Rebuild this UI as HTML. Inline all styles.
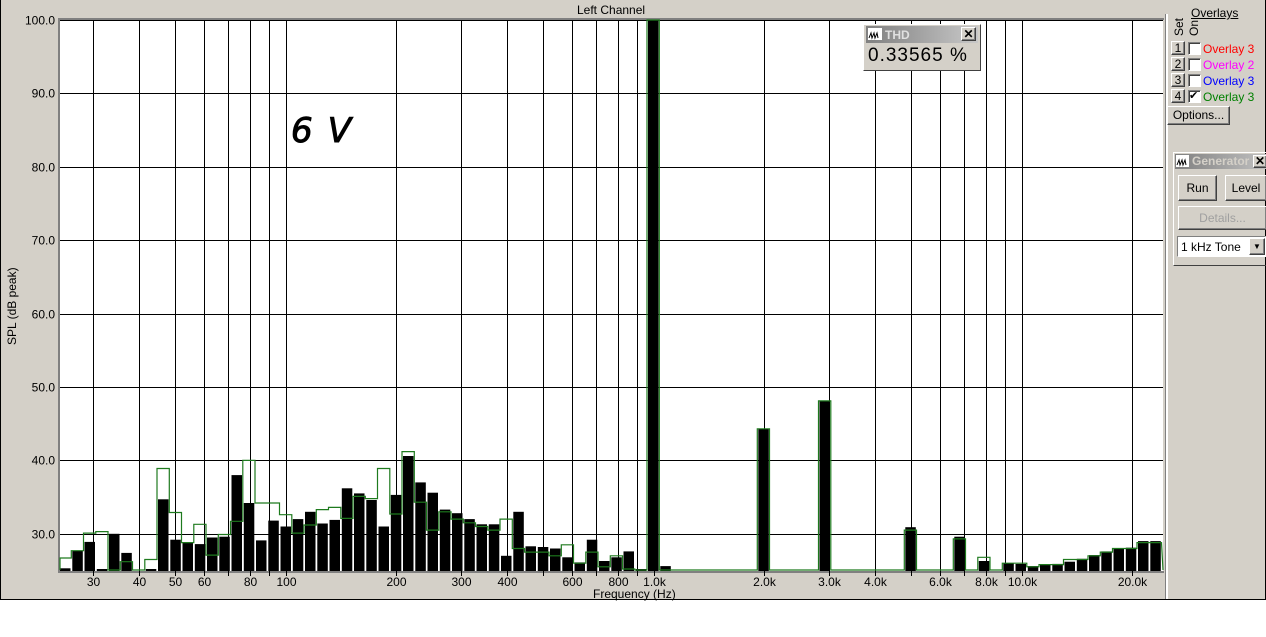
<!DOCTYPE html><html><head><meta charset="utf-8"><style>
body{margin:0;width:1266px;height:637px;background:#fff;overflow:hidden;font-family:"Liberation Sans",sans-serif}
#win{position:absolute;left:0;top:0;width:1264px;height:599px;background:#d4d0c8;border:1px solid #000;border-top:none}
.t{position:absolute;font-size:12px;color:#000;white-space:nowrap}
.btn{position:absolute;background:#d4d0c8;border:1px solid;border-color:#fff #404040 #404040 #fff;box-shadow:inset -1px -1px 0 #808080;font-size:12px;text-align:center;box-sizing:border-box}
.cb{position:absolute;width:13px;height:13px;background:#fff;border:1px solid;border-color:#808080 #fff #fff #808080;box-sizing:border-box;box-shadow:inset 1px 1px 0 #404040}
</style></head><body>
<div id="win">
<div class="t" style="left:576px;top:3px">Left Channel</div>
<div class="t" style="left:4px;top:345px;transform:rotate(-90deg);transform-origin:0 0">SPL (dB peak)</div>
<div class="t" style="left:592px;top:587px">Frequency (Hz)</div>
<svg id="s" width="1266" height="600" style="position:absolute;left:0;top:0"></svg>
<div style="position:absolute;left:1164px;top:14px;width:2px;height:585px;background:#fff;border-left:1px solid #808080"></div>
<div class="t" style="left:1190px;top:6px;text-decoration:underline">Overlays</div>
<div class="t" style="left:1171px;top:36px;transform:rotate(-90deg);transform-origin:0 0;font-size:12px">Set</div>
<div class="t" style="left:1186px;top:36px;transform:rotate(-90deg);transform-origin:0 0;font-size:12px">On</div>
<div id="ov"></div>
<div class="btn" style="left:1166px;top:106px;width:63px;height:19px;line-height:16px">Options...</div>
<div style="position:absolute;left:1172px;top:152px;width:94px;height:112px;border:1px solid;border-color:#fff #404040 #404040 #fff"></div>
<div style="position:absolute;left:1174px;top:154px;width:92px;height:15px;background:linear-gradient(90deg,#808080,#c0c0c0)"></div>
<div style="position:absolute;left:1175px;top:155px;width:13px;height:12px;background:#fff"><svg width="13" height="12"><path d="M1 9 L3 4 L4 9 L6 4 L7 9 L9 4 L10 9" stroke="#000" fill="none" stroke-width="1"/></svg></div>
<div class="t" style="left:1191px;top:154px;color:#d4d0c8;font-weight:bold">Generator</div>
<div class="btn" style="left:1252px;top:155px;width:14px;height:13px;line-height:11px;font-weight:bold">✕</div>
<div class="btn" style="left:1177px;top:175px;width:39px;height:26px;line-height:24px">Run</div>
<div class="btn" style="left:1224px;top:175px;width:42px;height:26px;line-height:24px">Level</div>
<div class="btn" style="left:1177px;top:206px;width:89px;height:24px;line-height:22px;color:#a0a0a0">Details...</div>
<div style="position:absolute;left:1176px;top:236px;width:89px;height:21px;background:#fff;border:1px solid;border-color:#808080 #fff #fff #808080;font-size:12px;line-height:20px;padding-left:3px;box-sizing:border-box">1 kHz Tone</div>
<div class="btn" style="left:1248px;top:238px;width:16px;height:17px;font-size:8px;line-height:15px">▼</div>
<div style="position:absolute;left:862px;top:24px;width:116px;height:45px;background:#d4d0c8;border:1px solid;border-color:#fff #404040 #404040 #fff"></div>
<div style="position:absolute;left:865px;top:26px;width:112px;height:17px;background:linear-gradient(90deg,#808080,#c8c8c8)"></div>
<div style="position:absolute;left:867px;top:28px;width:14px;height:12px;background:#fff"><svg width="14" height="12"><path d="M1 9 L3 4 L4 9 L6 4 L7 9 L9 4 L10 9" stroke="#000" fill="none" stroke-width="1"/></svg></div>
<div class="t" style="left:884px;top:28px;color:#e0e0e0;font-weight:bold">THD</div>
<div class="btn" style="left:960px;top:27px;width:15px;height:14px;line-height:12px;font-weight:bold">✕</div>
<div class="t" style="left:867px;top:45px;font-size:19px;letter-spacing:1px">0.33565 %</div>
</div>
<script>
var s=document.getElementById('s'),h='';
var L=59,R=1162,T=20,B=571;
function X(f){return 284.5+368*Math.log10(f/100)}
function Y(d){return T+(100-d)*7.34}
h+='<rect x="'+L+'" y="'+T+'" width="'+(R-L)+'" height="'+(B-T)+'" fill="#fff"/>';
h+='<rect x="57" y="18" width="2" height="'+(B-17)+'" fill="#808080"/><rect x="57" y="18" width="'+(R-56)+'" height="2" fill="#808080"/><rect x="57" y="'+B+'" width="'+(R-56)+'" height="2" fill="#808080"/>';
var fs=[30,40,50,60,70,80,90,100,200,300,400,500,600,700,800,900,1000,2000,3000,4000,5000,6000,7000,8000,9000,10000,20000];
var lab={30:'30',40:'40',50:'50',60:'60',80:'80',100:'100',200:'200',300:'300',400:'400',600:'600',800:'800',1000:'1.0k',2000:'2.0k',3000:'3.0k',4000:'4.0k',6000:'6.0k',8000:'8.0k',10000:'10.0k',20000:'20.0k'};
fs.forEach(function(f){var x=Math.round(X(f))+.5;h+='<line x1="'+x+'" y1="'+T+'" x2="'+x+'" y2="'+(B+5)+'" stroke="#000"/>';if(lab[f])h+='<text x="'+x+'" y="586" font-size="12" text-anchor="middle" font-family="Liberation Sans">'+lab[f]+'</text>';});
for(var d=30;d<=100;d+=10){var y=Math.round(Y(d))+.5;h+='<line x1="'+L+'" y1="'+y+'" x2="'+R+'" y2="'+y+'" stroke="#000"/><text x="54" y="'+(y+4)+'" font-size="12" text-anchor="end" font-family="Liberation Sans">'+d+'.0</text>';}
var b={0:25.3,1:27.7,2:28.9,3:25.2,4:30,5:27.4,7:25.2,8:34.7,9:29.2,10:28.8,11:28.6,12:29.5,13:29.6,14:38,15:34.2,16:29.1,17:31.8,18:31,19:32,20:33,21:31.4,22:31.9,23:36.2,24:35.5,25:34.6,26:31,27:35.3,28:40.6,29:37,30:35.6,31:33.3,32:32.8,33:32,34:31.3,35:31.3,36:27,37:33,38:28.3,39:28.2,40:28,41:26.8,42:26.1,43:29.2,44:26.3,45:26.8,46:27.6,47:25.2,48:100,49:25.6,57:44.3,62:48.1,69:30.9,73:29.6,75:26.3,77:26,78:25.9,79:25.6,80:25.8,81:25.9,82:26.2,83:26.6,84:27.1,85:27.6,86:28,87:28.1,88:29,89:29};
var g={0:26.7,1:27.7,2:30.1,3:30.3,4:25,5:26.2,6:25,7:26.5,8:38.9,9:32.9,10:28.8,11:31.3,12:27.1,13:29.9,14:31.7,15:40,16:34.2,17:34.2,18:32.6,19:30.1,20:31.2,21:33.3,22:33.6,23:32.1,24:35.1,25:34.8,26:38.9,27:32.7,28:41.2,29:34.3,30:30.5,31:33,32:32,33:31.5,34:31,35:30.5,36:32,37:28,38:27.5,39:27.5,40:27,41:28.5,42:26,43:27.5,44:25.5,45:27,46:25.2,47:25,48:100,49:25,57:44.3,62:48.1,69:30.5,73:29.3,75:26.8,77:26,78:26,79:25.5,80:25.8,81:25.8,82:26.5,83:26.5,84:27,85:27.5,86:28,87:28,88:28.8,89:28.8};
var st=12.25,x0=58;
for(var n=0;n<90;n++){if(b[n]){var x=x0+st*n,y=Y(b[n]);h+='<rect x="'+(x+1).toFixed(1)+'" y="'+y.toFixed(1)+'" width="10.5" height="'+(B-y).toFixed(1)+'"/>';}}
var p='M'+L+' '+(B-1);
for(var n=0;n<90;n++){var x=Math.max(L,x0+st*n),x2=Math.min(R,x0+st*(n+1)),v=g[n]||24.9,y=Math.min(Y(v),B-1);p+=' L'+x.toFixed(1)+' '+y.toFixed(1)+' L'+x2.toFixed(1)+' '+y.toFixed(1);}
p+=' L'+R+' '+(B-1);
h+='<path d="'+p+'" fill="none" stroke="#1e7a1e" stroke-width="1.2"/>';
h+='<text x="290" y="142" font-size="34" font-family="DejaVu Sans" font-style="italic" fill="#000" stroke="#000" stroke-width="1" textLength="60">6V</text>';
s.innerHTML=h;
var ov=document.getElementById('ov'),o='',c=['#ff0000','#ff00ff','#0000ff','#008000'],nm=['Overlay 3','Overlay 2','Overlay 3','Overlay 3'];
for(var i=0;i<4;i++){var y=41+i*16;o+='<div class="btn" style="left:1170px;top:'+y+'px;width:14px;height:14px;line-height:12px">'+(i+1)+'</div><div class="cb" style="left:1187px;top:'+(y+1)+'px;font-size:11px;line-height:11px">'+(i==3?'✔':'')+'</div><div class="t" style="left:1202px;top:'+(y+1)+'px;color:'+c[i]+'">'+nm[i]+'</div>';}
ov.innerHTML=o;
</script>
</body></html>
